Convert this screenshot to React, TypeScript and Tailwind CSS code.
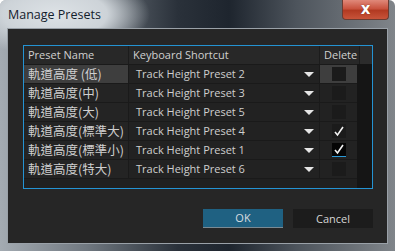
const rows = [
  { name: '軌道高度 (低)', preset: 'Track Height Preset 2', checked: false },
  { name: '軌道高度(中)', preset: 'Track Height Preset 3', checked: false },
  { name: '軌道高度(大)', preset: 'Track Height Preset 5', checked: false },
  { name: '軌道高度(標準大)', preset: 'Track Height Preset 4', checked: true },
  { name: '軌道高度(標準小)', preset: 'Track Height Preset 1', checked: true },
  { name: '軌道高度(特大)', preset: 'Track Height Preset 6', checked: false },
]

function Check() {
  return (
    <svg width="12" height="11" viewBox="0 0 12 11" className="block">
      <path d="M2 6 L4.5 9 L10 1" stroke="#f2f2f2" strokeWidth="1.6" fill="none" />
    </svg>
  )
}

export default function App() {
  return (
    <div
      className="relative flex h-[251px] w-[395px] flex-col overflow-hidden rounded-t-[6px] px-[7px] pb-[7px]"
      style={{ fontFamily: '"Open Sans", "Noto Sans CJK TC", sans-serif' }}
    >
      {/* window frame */}
      <div className="absolute inset-0 -z-10 bg-[linear-gradient(90deg,#a4abb2_0%,#707880_22%,#2a313a_45%,#1e252e_58%,#4d545c_75%,#80858a_100%)]" />
      <div className="absolute left-[-40px] top-[-28px] -z-10 h-[84px] w-[190px] rounded-full bg-[radial-gradient(closest-side,#dde2e6_0%,#cdd3d8_55%,rgba(170,178,186,0)_100%)]" />

      {/* title bar */}
      <div className="flex h-[28px] items-center justify-between">
        <span className="pl-[1px] pt-[2px] text-[12.5px] text-[#13202c]">Manage Presets</span>
        <div className="mr-[-1px] flex h-[20px] w-[47px] items-center justify-center self-start rounded-b-[4px] border border-t-0 border-[#6b3c32] bg-[linear-gradient(180deg,#e0897a_0%,#c9533f_45%,#b23a22_55%,#c8543a_100%)]">
          <span
            className="text-[15px] font-bold leading-none text-white [text-shadow:0_0_1px_#5a1a10]"
            style={{ fontFamily: '"DejaVu Sans", sans-serif' }}
          >
            x
          </span>
        </div>
      </div>

      {/* dialog body */}
      <div className="flex flex-1 flex-col border border-[#9aa1a8] bg-[#262626] pl-[15px] pr-[14px] pt-[16px]">
        <div className="flex h-[144px] w-[350px] flex-col border border-[#2493d3] bg-[#202020] text-[11px]">
          {/* header */}
          <div className="flex h-[18px] bg-[#282828] text-[#d0d0d0]">
            <div className="w-[105px] border-r border-[#1c1c1c] pl-[4px] leading-[18px]">Preset Name</div>
            <div className="w-[191px] border-r border-[#1c1c1c] pl-[4px] leading-[18px]">Keyboard Shortcut</div>
            <div className="w-[40px] border-r border-[#1c1c1c] pl-[4px] leading-[18px]">Delete</div>
            <div className="flex-1 bg-[#2c2c2c]" />
          </div>
          <div className="flex flex-1">
            <div className="flex w-[333px] flex-col">
              {rows.map((r, i) => (
                <div key={r.preset} className="flex h-[19px] border-t border-[#1a1a1a] text-[#cfcfcf]">
                  <div
                    className={`w-[105px] border-r border-[#1a1a1a] pl-[4px] text-[12.5px] leading-[18px] ${i === 0 ? 'bg-[#3e3e3e]' : 'bg-[#242424]'}`}
                    style={{ fontFamily: '"Noto Sans CJK TC", sans-serif' }}
                  >
                    {r.name}
                  </div>
                  <div className="flex w-[191px] items-center justify-between border-r border-[#1a1a1a] bg-[#222222] pl-[7px] pr-[5px] leading-[18px]">
                    <span>{r.preset}</span>
                    <svg width="10" height="5" viewBox="0 0 10 5">
                      <path d="M0 0 H10 L5 5 Z" fill="#e6e6e6" />
                    </svg>
                  </div>
                  <div className={`flex w-[37px] items-center justify-center ${i === 0 ? 'bg-[#3e3e3e]' : 'bg-[#222222]'}`}>
                    <div
                      className={`flex h-[14px] w-[14px] items-center justify-center ${r.checked && i === 4 ? 'border-b border-[#2a9ad8] bg-[#050505]' : 'bg-[#1b1b1b]'}`}
                    >
                      {r.checked && <Check />}
                    </div>
                  </div>
                </div>
              ))}
              <div className="flex-1 border-t border-[#1a1a1a] bg-[#202020]" />
            </div>
            <div className="flex-1 bg-[#151515]" />
          </div>
        </div>

        {/* buttons */}
        <div className="mt-[20px] flex w-[350px] justify-end gap-[10px] text-[11px]">
          <button className="h-[19px] w-[80px] border-b border-[#7a8a94] bg-[#1f6182] leading-[18px] text-[#d8dde0]">OK</button>
          <button className="h-[19px] w-[80px] bg-[#1c1c1c] leading-[18px] text-[#d6d6d6]">Cancel</button>
        </div>
      </div>
    </div>
  )
}
